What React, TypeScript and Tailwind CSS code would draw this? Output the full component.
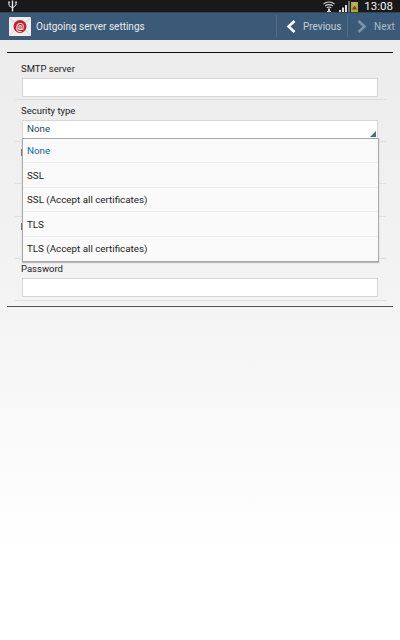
const options = ['None', 'SSL', 'SSL (Accept all certificates)', 'TLS', 'TLS (Accept all certificates)'];

function Field({ label, value, select, compact }: { label: string; value?: string; select?: boolean; compact?: boolean }) {
  return (
    <div className={`flex h-[42px] flex-col border-b border-[#dfdfdf] ${compact ? 'pt-[3px]' : 'pt-[4px]'}`}>
      <span className="h-[14px] pl-[6px] text-[9.5px] leading-[14px] text-[#1c1c1c]">{label}</span>
      <div className="relative mt-[2px] mr-[8px] ml-[7px] flex h-[19px] items-center border border-[#d6d6d6] bg-white px-1 text-[9.8px] text-[#1d4a5e]">
        {value}
        {select && (
          <svg viewBox="0 0 6 6" className="absolute right-[1px] bottom-[1px] h-[6px] w-[6px]">
            <path d="M6 0V6H0Z" fill="#4e6a85" />
          </svg>
        )}
      </div>
    </div>
  );
}

// row hidden behind the open dropdown, only the edge of its label sticks out
function HiddenRow({ top }: { top: string }) {
  return (
    <div className={`h-[42px] border-b border-[#dfdfdf] ${top}`}>
      <div className="ml-[6px] h-[7px] w-px bg-[#666666]" />
    </div>
  );
}

function MailIcon() {
  return (
    <svg viewBox="0 0 22 19" className="h-[19px] w-[22px]">
      <rect width="22" height="19" rx="1" fill="#efefef" />
      <path d="M0 1L11 10L22 1" stroke="#cfcfcf" fill="none" strokeWidth="1" />
      <path d="M0 19L8 10M22 19L14 10" stroke="#d8d8d8" fill="none" strokeWidth="1" />
      <circle cx="11" cy="9.5" r="6.5" fill="#c5202b" />
      <text x="11" y="12.5" textAnchor="middle" fontSize="9" fontWeight="700" fill="#ffffff" fontFamily="Roboto, sans-serif">@</text>
    </svg>
  );
}

export default function App() {
  return (
    <div className="flex h-[640px] w-[400px] flex-col overflow-hidden bg-white font-['Roboto',sans-serif]">
      <div className="flex h-[12px] items-center justify-between bg-[#191919] pr-[7px] pl-[8px] text-white">
        <svg viewBox="0 0 9 12" className="h-[12px] w-[9px]" fill="none" stroke="#e8e8e8">
          <path d="M4.5 0.5V11.5" strokeWidth="1.4" />
          <path d="M1 3V5.5L4.5 8L8 5V3" strokeWidth="1" />
          <rect x="0.2" y="1.5" width="1.6" height="1.6" fill="#e8e8e8" stroke="none" />
          <rect x="7.2" y="1.5" width="1.6" height="1.6" fill="#e8e8e8" stroke="none" />
        </svg>
        <div className="flex items-center">
          <svg viewBox="0 0 12 11" className="h-[11px] w-[12px]" fill="none" stroke="#d4d4d4" strokeWidth="1.1">
            <path d="M0.5 3.2C3.5 0.2 8.5 0.2 11.5 3.2" />
            <path d="M2.2 5C4.2 3.2 7.8 3.2 9.8 5" />
            <path d="M3.8 6.8C5 5.9 7 5.9 8.2 6.8" />
            <path d="M6 7.4V11" strokeWidth="2" />
            <path d="M4 10.5H8" />
          </svg>
          <svg viewBox="0 0 11 11" className="ml-[4px] h-[11px] w-[11px]">
            <path d="M0 11V9H2V11ZM3 11V6.5H5V11ZM6 11V4H8V11Z" fill="#dcdcdc" />
            <path d="M9 11V0H11V11Z" fill="#6e6e6e" />
          </svg>
          <svg viewBox="0 0 7 11" className="ml-[1px] h-[11px] w-[7px]">
            <rect x="0" y="1" width="7" height="10" fill="#9cb83c" />
            <rect x="2" y="1.5" width="3" height="3" fill="#d9a58c" />
            <path d="M1 8.5L3.5 4.5L6 8.5Z" fill="#a8281f" />
          </svg>
          <span className="ml-[6px] text-[11.5px] leading-[12px] text-[#f2f2f2]">13:08</span>
        </div>
      </div>

      <div className="flex h-[28px] items-center bg-[#3a5a78] pl-[9px] shadow-[inset_0_1px_0_#2d465e]">
        <MailIcon />
        <span className="ml-[5px] flex-1 text-[10px] text-[#e6ecf1]">Outgoing server settings</span>
        <div className="flex h-[22px] w-[71px] items-center border-l border-[#4d6c88] pl-[9px] text-[10px] text-[#c3d0db]">
          <svg viewBox="0 0 10 13" className="h-[13px] w-[10px]" fill="none" stroke="#ffffff" strokeWidth="2.6">
            <path d="M8.5 1L2.5 6.5L8.5 12" />
          </svg>
          <span className="ml-[7px]">Previous</span>
        </div>
        <div className="flex h-[22px] w-[53px] items-center border-l border-[#4d6c88] pl-[9px] text-[10px] text-[#a9bac9]">
          <svg viewBox="0 0 10 13" className="h-[13px] w-[10px]" fill="none" stroke="#7c95ab" strokeWidth="2.6">
            <path d="M1.5 1L7.5 6.5L1.5 12" />
          </svg>
          <span className="ml-[7px]">Next</span>
        </div>
      </div>

      <div className="flex flex-1 flex-col bg-gradient-to-b from-[#ececec] via-[#f4f4f4] via-[45%] to-white to-[85%]">
        <div className="mx-[7px] mt-[12px] h-px bg-[#111111]" />
        <div className="relative mt-[5px] mr-[14px] ml-[15px] flex flex-col">
          <Field label="SMTP server" />
          <Field label="Security type" value="None" select />
          <HiddenRow top="pt-[7px]" />
          <div className="h-[33px] border-b border-[#dfdfdf]" />
          <HiddenRow top="pt-[6px]" />
          <Field label="Password" compact />
          <div className="absolute top-[80px] left-[7px] w-[357px] border border-[#a8a8a8] bg-[#fafafa] shadow-[0_1px_1px_#bbbbbb]">
            {options.map((o, i) => (
              <div
                key={o}
                className={`flex h-[24.4px] items-center px-1 pt-[2px] text-[9.8px] ${i < options.length - 1 ? 'border-b border-[#efefef]' : ''} ${i === 0 ? 'text-[#1668b0]' : 'text-[#1c1c1c]'}`}
              >
                {o}
              </div>
            ))}
          </div>
        </div>
        <div className="mx-[7px] mt-[5px] h-px bg-[#555555]" />
      </div>
    </div>
  );
}
